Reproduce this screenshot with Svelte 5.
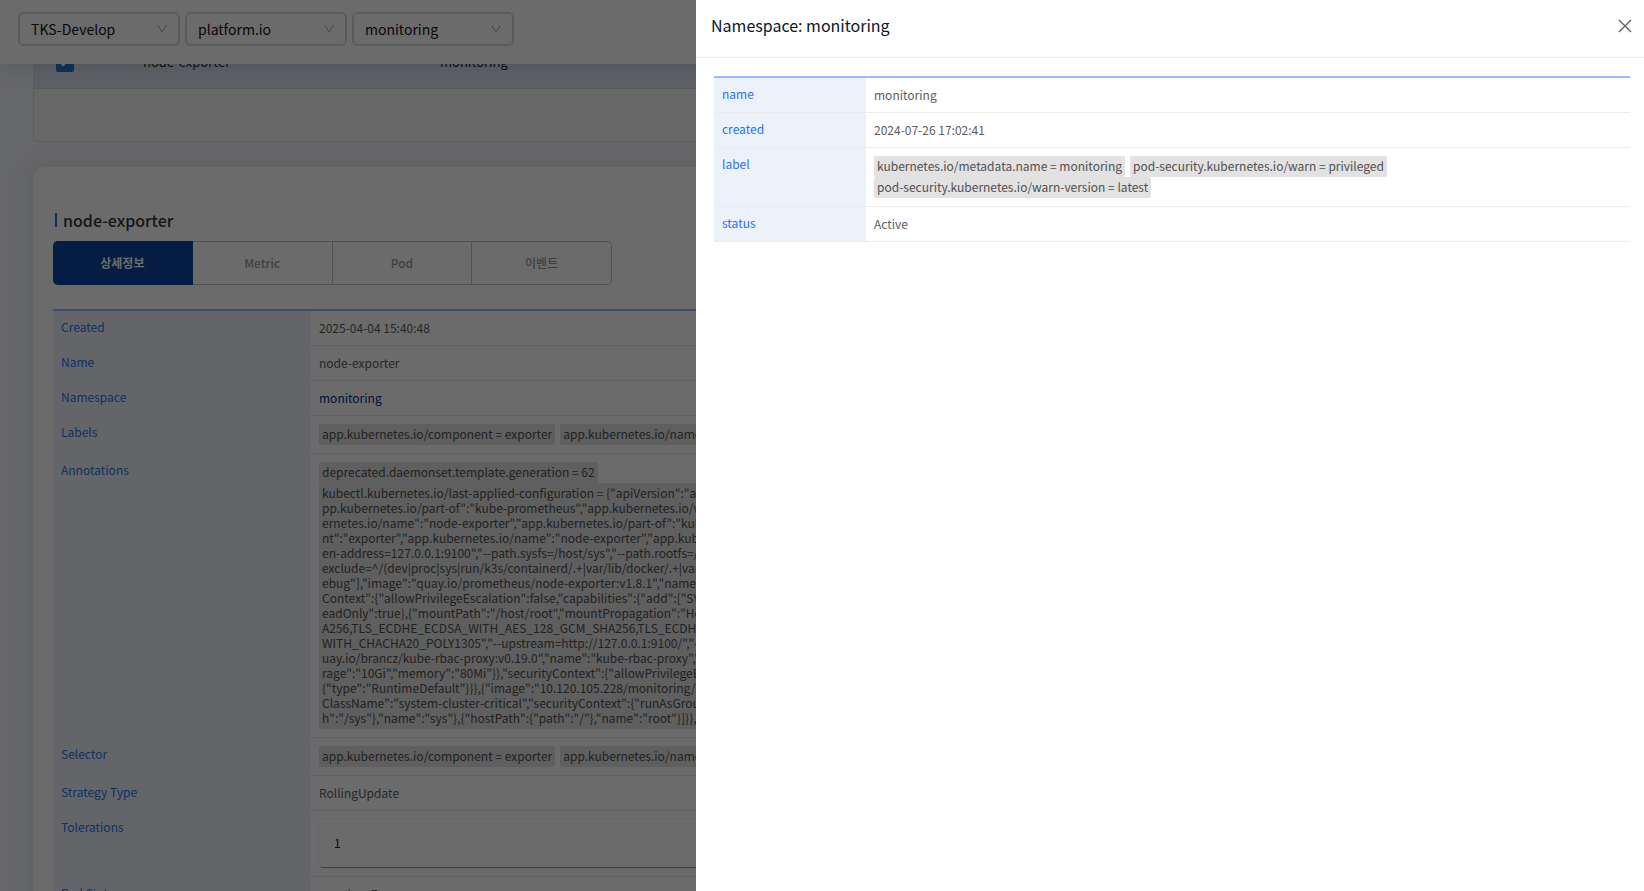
<script>
  const filters = [
    { id: 'stack', label: 'Stack', value: 'TKS-Develop' },
    { id: 'cluster', label: 'Cluster', value: 'platform.io' },
    { id: 'namespace', label: 'Namespace', value: 'monitoring' }
  ];
  const tabs = ['상세정보', 'Metric', 'Pod', '이벤트'];
  const labels = ['app.kubernetes.io/component = exporter', 'app.kubernetes.io/name = node-exporter'];
  const config = [
    'kubectl.kubernetes.io/last-applied-configuration = {"apiVersion":"apps/v1"',
    'pp.kubernetes.io/part-of":"kube-prometheus","app.kubernetes.io/version',
    'ernetes.io/name":"node-exporter","app.kubernetes.io/part-of":"kube-pro',
    'nt":"exporter","app.kubernetes.io/name":"node-exporter","app.kubernetes',
    'en-address=127.0.0.1:9100","--path.sysfs=/host/sys","--path.rootfs=/host',
    'exclude=^/(dev|proc|sys|run/k3s/containerd/.+|var/lib/docker/.+|var/lib',
    'ebug"],"image":"quay.io/prometheus/node-exporter:v1.8.1","name":"node',
    'Context":{"allowPrivilegeEscalation":false,"capabilities":{"add":["SYS_TIME',
    'eadOnly":true},{"mountPath":"/host/root","mountPropagation":"HostTo',
    'A256,TLS_ECDHE_ECDSA_WITH_AES_128_GCM_SHA256,TLS_ECDHE_RSA',
    'WITH_CHACHA20_POLY1305","--upstream=http://127.0.0.1:9100/","--',
    'uay.io/brancz/kube-rbac-proxy:v0.19.0","name":"kube-rbac-proxy","ports',
    'rage":"10Gi","memory":"80Mi"}},"securityContext":{"allowPrivilegeEscal',
    '{"type":"RuntimeDefault"}}},{"image":"10.120.105.228/monitoring/node',
    'ClassName":"system-cluster-critical","securityContext":{"runAsGroup":',
    'h":"/sys"},"name":"sys"},{"hostPath":{"path":"/"},"name":"root"}]}},"up'
  ].join('\n');
  const namespaceLabels = [
    'kubernetes.io/metadata.name = monitoring',
    'pod-security.kubernetes.io/warn = privileged',
    'pod-security.kubernetes.io/warn-version = latest'
  ];
  let activeTab = $state(0);
</script>

<div class="page">
  <header class="topbar">
    {#each filters as f}
      <div class="picker">
        <select id={f.id} aria-label={f.label}><option>{f.value}</option></select>
        <svg viewBox="0 0 12 12" aria-hidden="true"><path d="M1.500 2L6 9L10.500 2" /></svg>
      </div>
    {/each}
  </header>

  <main>
    <div class="grid">
      <div class="grid-row">
        <input type="checkbox" checked aria-label="node-exporter" />
        <span>node-exporter</span>
        <span>monitoring</span>
      </div>
    </div>

    <section class="card">
      <h2>node-exporter</h2>
      <div class="tabs">
        {#each tabs as t, i}
          <button class:active={activeTab === i} onclick={() => (activeTab = i)}>{t}</button>
        {/each}
      </div>

      <table class="info">
        <tbody>
          <tr><th>Created</th><td>2025-04-04 15:40:48</td></tr>
          <tr><th>Name</th><td>node-exporter</td></tr>
          <tr><th>Namespace</th><td><a href="#monitoring">monitoring</a></td></tr>
          <tr>
            <th>Labels</th>
            <td><div class="chips">{#each labels as l}<span class="chip">{l}</span>{/each}</div></td>
          </tr>
          <tr>
            <th>Annotations</th>
            <td>
              <div class="chips">
                <span class="chip">deprecated.daemonset.template.generation = 62</span>
                <div class="chip config">{config}</div>
              </div>
            </td>
          </tr>
          <tr>
            <th>Selector</th>
            <td><div class="chips">{#each labels as l}<span class="chip">{l}</span>{/each}</div></td>
          </tr>
          <tr><th>Strategy Type</th><td>RollingUpdate</td></tr>
          <tr><th>Tolerations</th><td><div class="panel">1</div></td></tr>
          <tr><th>Pod Status</th><td><div class="status">running: 7</div></td></tr>
        </tbody>
      </table>
    </section>
  </main>
</div>

<div class="backdrop"></div>

<aside class="drawer" aria-labelledby="drawer-title">
  <div class="drawer-head">
    <h1 id="drawer-title">Namespace: monitoring</h1>
    <button aria-label="Close">
      <svg viewBox="0 0 14 14" aria-hidden="true"><path d="M1 1L13 13M13 1L1 13" /></svg>
    </button>
  </div>
  <div class="drawer-body">
    <table class="info">
      <tbody>
        <tr><th>name</th><td>monitoring</td></tr>
        <tr><th>created</th><td>2024-07-26 17:02:41</td></tr>
        <tr>
          <th>label</th>
          <td><div class="chips namespace-labels">{#each namespaceLabels as l}<span class="chip">{l}</span>{/each}</div></td>
        </tr>
        <tr><th>status</th><td>Active</td></tr>
      </tbody>
    </table>
  </div>
</aside>

<style>
  :global(body) {
    margin: 0;
    overflow: hidden;
    font-family: 'Noto Sans CJK KR', 'Noto Sans', sans-serif;
  }
  .page {
    height: 100vh;
    overflow: hidden;
    background: #f3f5f9;
    color: #222;
  }
  .topbar {
    position: relative;
    z-index: 1;
    display: flex;
    gap: 5px;
    height: 64px;
    box-sizing: border-box;
    padding: 12px 18px;
    background: #fff;
    box-shadow: 0 2px 20px rgba(40, 60, 90, 0.16);
  }
  .picker {
    position: relative;
    width: 162px;
    height: 34px;
    box-sizing: border-box;
    border: 1px solid #dedede;
    border-radius: 5px;
  }
  .picker select {
    appearance: none;
    width: 100%;
    height: 100%;
    padding: 0 11px;
    border: 1px solid #d2d2d2;
    border-radius: 4px;
    background: #fff;
    font: 14px/24px 'Noto Sans CJK KR', sans-serif;
    color: #111;
  }
  .picker svg {
    position: absolute;
    right: 11px;
    top: 10px;
    width: 12px;
    height: 12px;
    fill: none;
    stroke: #a8a8a8;
    pointer-events: none;
  }
  main {
    margin-top: -28px;
    padding: 0 33px;
  }
  .grid {
    height: 106px;
    box-sizing: border-box;
    border: 1px solid #dcdde0;
    border-top: 0;
    border-radius: 0 0 4px 4px;
    background: #f5f6f8;
  }
  .grid-row {
    display: grid;
    grid-template-columns: 87px 297px 1fr;
    align-items: center;
    height: 53px;
    box-sizing: border-box;
    padding: 0 0 2px 22px;
    border-bottom: 1px solid #d3d6dc;
    background: #dee6f2;
    font-size: 13px;
  }
  .grid-row input {
    appearance: none;
    display: flex;
    justify-content: center;
    width: 18px;
    height: 22px;
    margin: 0;
    border-radius: 2px;
    background: #1976d2;
  }
  .grid-row input::after {
    content: '';
    width: 4px;
    height: 9px;
    margin-top: 5px;
    border: solid #fff;
    border-width: 0 2px 2px 0;
    transform: rotate(45deg);
  }
  .card {
    margin-top: 25px;
    padding: 41px 20px 20px;
    border-radius: 12px;
    background: #fff;
    box-shadow: 0 0 24px rgba(60, 80, 110, 0.12);
  }
  h2 {
    display: flex;
    align-items: center;
    gap: 6px;
    margin: 0 0 9px;
    padding-left: 2px;
    font-size: 16px;
    font-weight: 500;
    line-height: 24px;
    color: #333;
  }
  h2::before {
    content: '';
    width: 2px;
    height: 14px;
    background: #2f6fe4;
  }
  .tabs {
    display: flex;
    width: 559px;
    height: 44px;
    margin-bottom: 24px;
  }
  .tabs button {
    flex: 1;
    border: 1px solid #c4c4c4;
    border-left-width: 0;
    background: #fff;
    color: #999;
    font: 500 12px/18px 'Noto Sans CJK KR', sans-serif;
  }
  .tabs button:first-child {
    border-radius: 5px 0 0 5px;
  }
  .tabs button:last-child {
    border-radius: 0 5px 5px 0;
  }
  .tabs .active {
    border-color: #0d47a1;
    background: #0d47a1;
    color: #fff;
    font-weight: 700;
  }
  .info {
    width: 100%;
    table-layout: fixed;
    border-collapse: separate;
    border-spacing: 0;
    border-top: 2px solid #93bffa;
    font-size: 12px;
    line-height: 18px;
    color: #5c5c5c;
  }
  .info th {
    width: 258px;
    box-sizing: border-box;
    padding: 7px 8px 8px;
    border-bottom: 1px solid #edeff6;
    background: #edf1fa;
    color: #2674f2;
    font-weight: 400;
    text-align: left;
    vertical-align: top;
  }
  .info td {
    padding: 8px;
    border-bottom: 1px solid #ececec;
  }
  .info a {
    color: #002f80;
    text-decoration: none;
  }
  .chips {
    display: flex;
    flex-wrap: wrap;
    column-gap: 5px;
  }
  .namespace-labels {
    max-width: 560px;
  }
  .chip {
    padding: 2px 3px 4px;
    border-radius: 2px;
    background: #e2e2e2;
    color: #505050;
    line-height: 15px;
    white-space: pre;
  }
  .config {
    width: 100%;
    overflow: hidden;
  }
  .panel {
    padding: 15px;
    margin-bottom: 1px;
    border-radius: 4px;
    color: #111;
    box-shadow: 0 2px 1px -1px rgba(0, 0, 0, 0.4), 0 0 2px rgba(0, 0, 0, 0.15);
  }
  .status {
    padding: 0 2px;
  }
  .backdrop {
    position: fixed;
    inset: 0;
    z-index: 2;
    background: rgba(0, 0, 0, 0.58);
  }
  .drawer {
    position: fixed;
    inset: 0 0 0 696px;
    z-index: 3;
    background: #fff;
  }
  .drawer-head {
    display: flex;
    align-items: center;
    justify-content: space-between;
    padding: 12px 12px 19px 15px;
    border-bottom: 1px solid #eee;
  }
  .drawer-head h1 {
    margin: 0;
    font-size: 16px;
    line-height: 26px;
    font-weight: 400;
    color: #0c1528;
  }
  .drawer-head button {
    display: flex;
    padding: 2px 0 0;
    border: 0;
    background: none;
  }
  .drawer-head svg {
    width: 14px;
    height: 14px;
    fill: none;
    stroke: #606060;
    stroke-width: 1.4;
  }
  .drawer-body {
    padding: 18px 14px 18px 18px;
  }
  .drawer .info th {
    width: 152px;
    border-bottom-color: #ececec;
  }
</style>
